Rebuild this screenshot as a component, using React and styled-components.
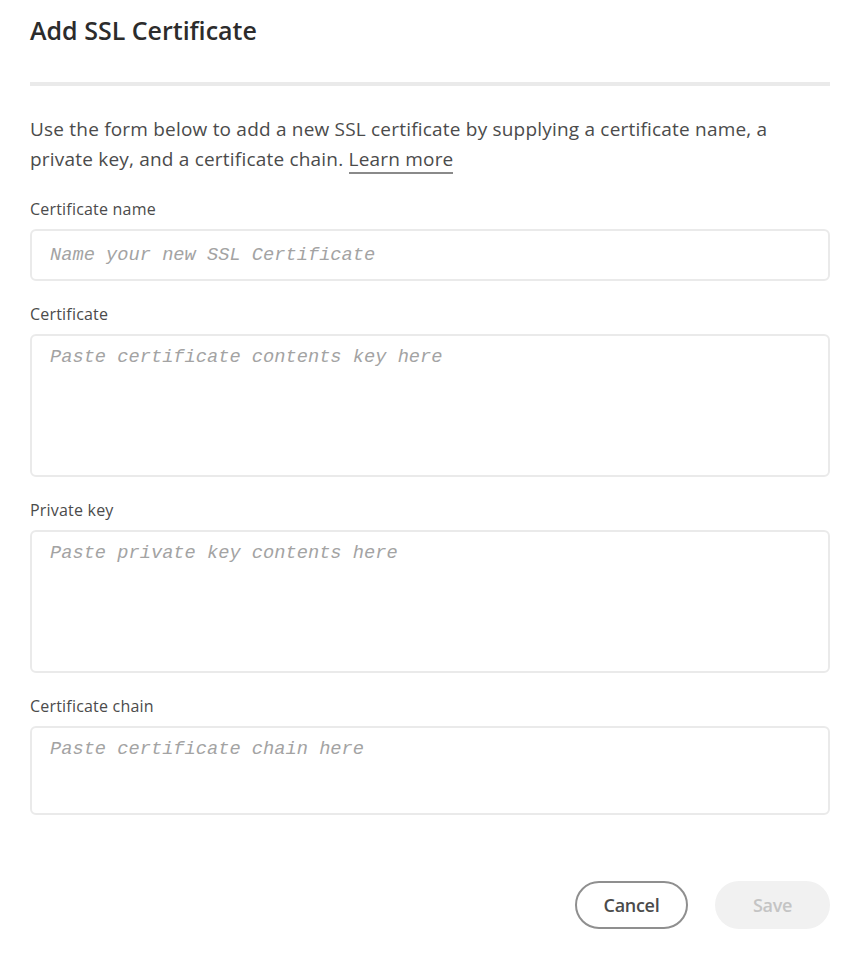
import React from 'react';
import styled, { createGlobalStyle } from 'styled-components';

const GlobalStyle = createGlobalStyle`
  body {
    margin: 0;
    background: #ffffff;
    font-family: "Open Sans", "Noto Sans", sans-serif;
  }
`;

const Dialog = styled.div`
  width: 800px;
  padding: 15px 30px 24px;
  display: flex;
  flex-direction: column;
`;

const Title = styled.h2`
  margin: 0;
  font-size: 25px;
  line-height: 30px;
  font-weight: 600;
  color: #2c2c2c;
`;

const Divider = styled.hr`
  margin: 37px 0 28px;
  border: 0;
  height: 4px;
  background: #eaeaea;
`;

const Intro = styled.p`
  margin: 0 0 25px;
  font-size: 19px;
  line-height: 30px;
  letter-spacing: 0.2px;
  color: #4b4b4b;
`;

const LearnMore = styled.a`
  color: #4b4b4b;
  text-decoration: none;
  border-bottom: 2px solid #8a8a8a;
  cursor: pointer;
`;

const Fields = styled.div`
  display: flex;
  flex-direction: column;
  gap: 23px;
`;

const Field = styled.label`
  display: flex;
  flex-direction: column;
  gap: 10px;
`;

const LabelText = styled.span`
  font-size: 16px;
  line-height: 20px;
  color: #4b4b4b;
  letter-spacing: 0.2px;
`;

const boxStyles = `
  box-sizing: border-box;
  width: 100%;
  border: 2px solid #eaeaea;
  border-radius: 6px;
  background: #fff;
  font-family: "Liberation Mono", "DejaVu Sans Mono", monospace;
  font-size: 18.7px;
  color: #2c2c2c;
  outline: none;
  &::placeholder {
    color: #a3a3a3;
    font-style: italic;
  }
`;

const TextInput = styled.input`
  ${boxStyles}
  height: 52px;
  padding: 0 18px;
`;

const TextArea = styled.textarea`
  ${boxStyles}
  height: ${p => p.$h}px;
  padding: 9px 18px;
  line-height: 24px;
  resize: none;
  display: block;
`;

const Footer = styled.div`
  display: flex;
  justify-content: flex-end;
  gap: 27px;
  margin-top: 66px;
`;

const Button = styled.button`
  box-sizing: border-box;
  height: 48px;
  padding: 0 22px;
  border-radius: 24px;
  font-family: "Open Sans", "Noto Sans", sans-serif;
  font-size: 18px;
  font-weight: 600;
  letter-spacing: -0.3px;
  border: 2px solid ${p => (p.$quiet ? '#8f8f8f' : 'transparent')};
  background: ${p => (p.$quiet ? '#fff' : '#f1f1f1')};
  color: ${p => (p.$quiet ? '#4b4b4b' : '#c4c4c4')};
  min-width: ${p => (p.$quiet ? '113px' : '115px')};
`;

export default function App() {
  return (
    <>
      <GlobalStyle />
      <Dialog>
        <Title>Add SSL Certificate</Title>
        <Divider />
        <Intro>
          Use the form below to add a new SSL certificate by supplying a certificate name, a
          <br />
          private key, and a certificate chain. <LearnMore>Learn more</LearnMore>
        </Intro>
        <Fields>
          <Field>
            <LabelText>Certificate name</LabelText>
            <TextInput placeholder="Name your new SSL Certificate" />
          </Field>
          <Field>
            <LabelText>Certificate</LabelText>
            <TextArea $h={143} placeholder="Paste certificate contents key here" />
          </Field>
          <Field>
            <LabelText>Private key</LabelText>
            <TextArea $h={143} placeholder="Paste private key contents here" />
          </Field>
          <Field>
            <LabelText>Certificate chain</LabelText>
            <TextArea $h={89} placeholder="Paste certificate chain here" />
          </Field>
        </Fields>
        <Footer>
          <Button $quiet>Cancel</Button>
          <Button disabled>Save</Button>
        </Footer>
      </Dialog>
    </>
  );
}
